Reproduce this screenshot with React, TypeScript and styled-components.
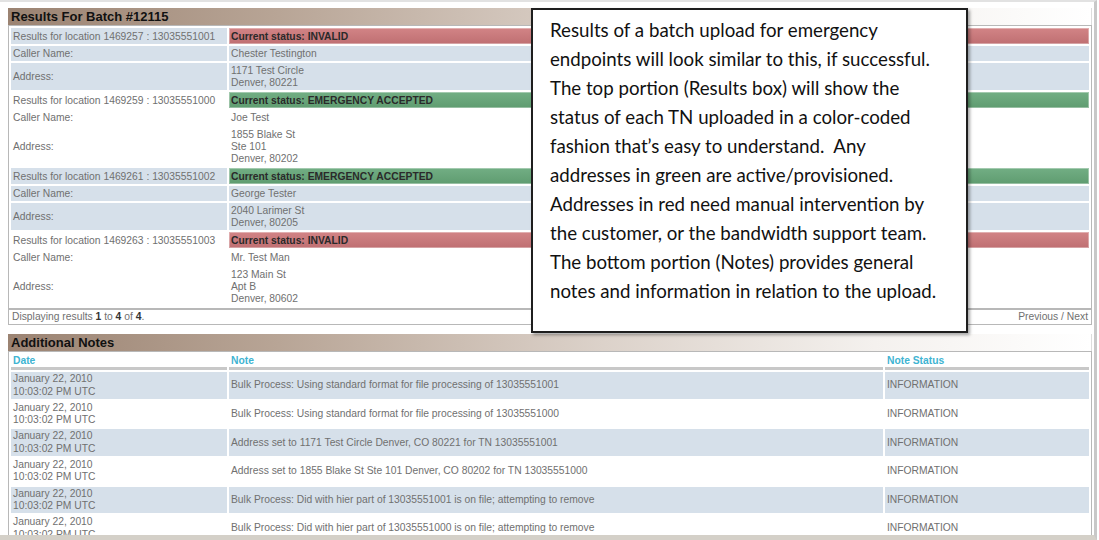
import React from "react";
import styled, { createGlobalStyle } from "styled-components";

interface ResultEntry {
  location: string;
  tn: string;
  valid: boolean;
  caller: string;
  address: string[];
}

const results: ResultEntry[] = [
  { location: "1469257", tn: "13035551001", valid: false, caller: "Chester Testington", address: ["1171 Test Circle", "Denver, 80221"] },
  { location: "1469259", tn: "13035551000", valid: true, caller: "Joe Test", address: ["1855 Blake St", "Ste 101", "Denver, 80202"] },
  { location: "1469261", tn: "13035551002", valid: true, caller: "George Tester", address: ["2040 Larimer St", "Denver, 80205"] },
  { location: "1469263", tn: "13035551003", valid: false, caller: "Mr. Test Man", address: ["123 Main St", "Apt B", "Denver, 80602"] },
];

const notes = [
  "Bulk Process: Using standard format for file processing of 13035551001",
  "Bulk Process: Using standard format for file processing of 13035551000",
  "Address set to 1171 Test Circle Denver, CO 80221 for TN 13035551001",
  "Address set to 1855 Blake St Ste 101 Denver, CO 80202 for TN 13035551000",
  "Bulk Process: Did with hier part of 13035551001 is on file; attempting to remove",
  "Bulk Process: Did with hier part of 13035551000 is on file; attempting to remove",
];

const calloutLines = [
  "Results of a batch upload for emergency",
  "endpoints will look similar to this, if successful.",
  "The top portion (Results box) will show the",
  "status of each TN uploaded in a color-coded",
  "fashion that\u2019s easy to understand.\u00a0 Any",
  "addresses in green are active/provisioned.",
  "Addresses in red need manual intervention by",
  "the customer, or the bandwidth support team.",
  "The bottom portion (Notes) provides general",
  "notes and information in relation to the upload.",
];

const App = () => {
  return (
    <>
      <GlobalStyle />
      <Frame>
        <Page>
          <SectionHeader>Results For Batch #12115</SectionHeader>
          <ResultsTable>
            <tbody>
              {results.map((r, i) => {
                const shade = i % 2 === 0;
                return (
                  <React.Fragment key={r.location}>
                    <tr>
                      <LabelCell $shade={shade}>
                        Results for location {r.location} : {r.tn}
                      </LabelCell>
                      <StatusCell $ok={r.valid}>
                        Current status: {r.valid ? "EMERGENCY ACCEPTED" : "INVALID"}
                      </StatusCell>
                    </tr>
                    <tr>
                      <LabelCell $shade={shade}>Caller Name:</LabelCell>
                      <ValueCell $shade={shade}>{r.caller}</ValueCell>
                    </tr>
                    <tr>
                      <LabelCell $shade={shade}>Address:</LabelCell>
                      <ValueCell $shade={shade}>
                        {r.address.map((line) => (
                          <div key={line}>{line}</div>
                        ))}
                      </ValueCell>
                    </tr>
                  </React.Fragment>
                );
              })}
            </tbody>
          </ResultsTable>
          <Pager>
            <span>
              Displaying results <b>1</b> to <b>4</b> of <b>4</b>.
            </span>
            <span>Previous / Next</span>
          </Pager>

          <SectionHeader>Additional Notes</SectionHeader>
          <NotesTable>
            <thead>
              <tr>
                <HeadCell $width={212}>Date</HeadCell>
                <HeadCell>Note</HeadCell>
                <HeadCell $width={200}>Note Status</HeadCell>
              </tr>
            </thead>
            <tbody>
              {notes.map((n, i) => (
                <tr key={i}>
                  <NoteCell $shade={i % 2 === 0}>
                    <div>January 22, 2010</div>
                    <div>10:03:02 PM UTC</div>
                  </NoteCell>
                  <NoteCell $shade={i % 2 === 0}>{n}</NoteCell>
                  <NoteCell $shade={i % 2 === 0}>INFORMATION</NoteCell>
                </tr>
              ))}
            </tbody>
          </NotesTable>
        </Page>

        <Callout>
          {calloutLines.map((line) => (
            <CalloutLine key={line}>{line}</CalloutLine>
          ))}
        </Callout>
      </Frame>
    </>
  );
};

const GlobalStyle = createGlobalStyle`
  html, body {
    margin: 0;
    padding: 0;
    background: #fff;
    overflow: hidden;
  }
`;

const Frame = styled.div`
  position: relative;
  width: 1094px;
  height: 533px;
  overflow: hidden;
  border-top: 2px solid #e2e2e2;
  border-right: 3px solid #c8c8c8;
  border-bottom: 5px solid #d4d0c8;
  font-family: "Liberation Sans", Arial, sans-serif;
`;

const Page = styled.div`
  display: flex;
  flex-direction: column;
  width: 1084px;
  padding: 6px 0 0 8px;
`;

const SectionHeader = styled.div`
  height: 18px;
  line-height: 18px;
  padding-left: 3px;
  font-size: 13px;
  font-weight: bold;
  color: #111;
  background: linear-gradient(to right, #9b8372 0%, #b8a596 25%, #dcd2ca 55%, #f4f1ee 80%, #ffffff 100%);
  border-right: 1px solid #ddd;
`;

const ResultsTable = styled.table`
  width: 100%;
  border: 1px solid #b8b8b8;
  border-spacing: 2px;
  margin-top: -1px;
  font-size: 10.3px;
  line-height: 12px;
  color: #707070;
`;

const LabelCell = styled.td<{ $shade: boolean }>`
  width: 212px;
  padding: 2px 2px 1px;
  vertical-align: middle;
  white-space: nowrap;
  background: ${(p) => (p.$shade ? "#d6e0ea" : "#fff")};
`;

const ValueCell = styled.td<{ $shade: boolean }>`
  padding: 2px 2px 1px;
  vertical-align: middle;
  background: ${(p) => (p.$shade ? "#d6e0ea" : "#fff")};
`;

const StatusCell = styled.td<{ $ok: boolean }>`
  padding: 3px 2px 1px;
  font-weight: bold;
  color: #2a2a2a;
  background: ${(p) =>
    p.$ok
      ? "linear-gradient(#72ae84, #5f9c70)"
      : "linear-gradient(#d28486, #bf6f72)"};
  box-shadow: inset 0 0 0 1px rgba(255, 255, 255, 0.35);
`;

const Pager = styled.div`
  display: flex;
  justify-content: space-between;
  margin-top: 0;
  margin-bottom: 9px;
  padding: 1px 3px 1px;
  border: 1px solid #b8b8b8;
  font-size: 10.3px;
  line-height: 12px;
  color: #707070;

  b {
    color: #333;
  }
`;

const NotesTable = styled.table`
  width: 100%;
  border: 1px solid #b8b8b8;
  border-spacing: 2px;
  margin-top: -1px;
  font-size: 10.3px;
  line-height: 12.3px;
  color: #707070;
`;

const HeadCell = styled.th<{ $width?: number }>`
  ${(p) => (p.$width ? `width: ${p.$width}px;` : "")}
  padding: 1px 2px 0;
  text-align: left;
  font-weight: bold;
  color: #40b4d2;
  border-bottom: 3px solid #c8c8c8;
`;

const NoteCell = styled.td<{ $shade: boolean }>`
  padding: 1px 2px;
  vertical-align: middle;
  white-space: nowrap;
  background: ${(p) => (p.$shade ? "#d6e0ea" : "#fff")};
`;

const Callout = styled.div`
  position: absolute;
  left: 531px;
  top: 6px;
  width: 398px;
  height: 315px;
  padding: 6px 18px 0 17px;
  background: #fff;
  border: 2px solid #1e1e1e;
  box-shadow: 2px 2px 3px rgba(0, 0, 0, 0.35);
  font-family: Lato, "Open Sans", sans-serif;
  font-size: 18.7px;
  color: #111;
`;

const CalloutLine = styled.div`
  height: 29px;
  line-height: 29px;
  white-space: pre;
`;

export default App;
